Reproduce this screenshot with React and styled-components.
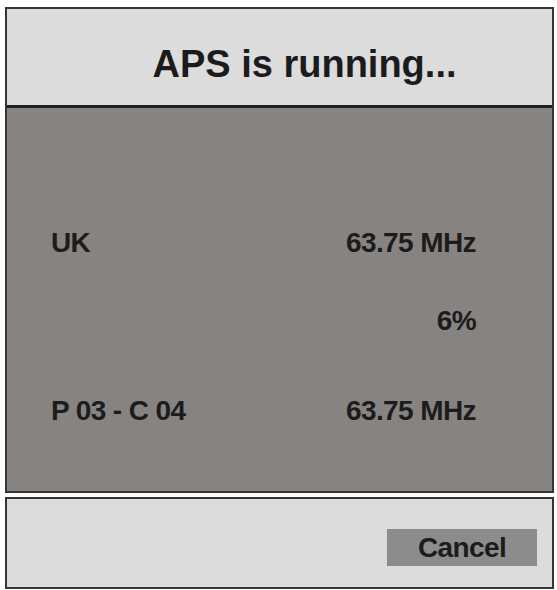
import React from "react";
import styled, { createGlobalStyle } from "styled-components";

const GlobalStyle = createGlobalStyle`
  html, body {
    margin: 0;
    padding: 0;
    background: #ffffff;
  }
  body {
    font-family: "Liberation Sans", Arial, sans-serif;
  }
`;

const Screen = styled.div`
  width: 557px;
  height: 590px;
  box-sizing: border-box;
  padding: 7px 3px 0 5px;
  display: flex;
  flex-direction: column;
  gap: 4px;
`;

const Panel = styled.div`
  box-sizing: border-box;
  width: 549px;
  height: 486px;
  border: 2px solid #353535;
  display: flex;
  flex-direction: column;
`;

const Header = styled.div`
  box-sizing: border-box;
  height: 99px;
  flex: none;
  background: #dcdcdc;
  border-bottom: 3px solid #1f1f1f;
  display: flex;
  align-items: center;
  justify-content: center;
  padding: 14px 0 0 50px;
`;

const Title = styled.h1`
  margin: 0;
  font-size: 38px;
  font-weight: 700;
  color: #1b1b1b;
  letter-spacing: 0;
`;

const Body = styled.div`
  flex: 1;
  background: #878381;
  box-sizing: border-box;
  padding: 120px 76px 0 44px;
  display: flex;
  flex-direction: column;
`;

const Row = styled.div`
  display: flex;
  justify-content: space-between;
  align-items: center;
  height: 30px;
  margin-top: ${(p) => p.$offset || 0}px;
`;

const Label = styled.span`
  font-size: 28px;
  line-height: 30px;
  font-weight: 700;
  color: #1c1c1c;
  letter-spacing: -0.6px;
`;

const Value = styled(Label)`
  margin-left: auto;
`;

const Footer = styled.div`
  box-sizing: border-box;
  width: 549px;
  height: 92px;
  border: 2px solid #353535;
  background: #dcdcdc;
  display: flex;
  justify-content: flex-end;
  align-items: flex-end;
  padding: 0 15px 21px 0;
`;

const Button = styled.button`
  width: 150px;
  height: 37px;
  border: none;
  padding: 0;
  background: #8c8c8c;
  color: #1c1c1c;
  font-family: "Liberation Sans", Arial, sans-serif;
  font-size: 28px;
  font-weight: 700;
  letter-spacing: -0.6px;
  cursor: pointer;
`;

const rows = [
  { label: "UK", value: "63.75 MHz", offset: 0 },
  { label: "", value: "6%", offset: 48 },
  { label: "P 03 - C 04", value: "63.75 MHz", offset: 60 },
];

export default function App() {
  return (
    <>
      <GlobalStyle />
      <Screen>
        <Panel>
          <Header>
            <Title>APS is running...</Title>
          </Header>
          <Body>
            {rows.map((r, i) => (
              <Row key={i} $offset={r.offset}>
                {r.label && <Label>{r.label}</Label>}
                <Value>{r.value}</Value>
              </Row>
            ))}
          </Body>
        </Panel>
        <Footer>
          <Button type="button">Cancel</Button>
        </Footer>
      </Screen>
    </>
  );
}
